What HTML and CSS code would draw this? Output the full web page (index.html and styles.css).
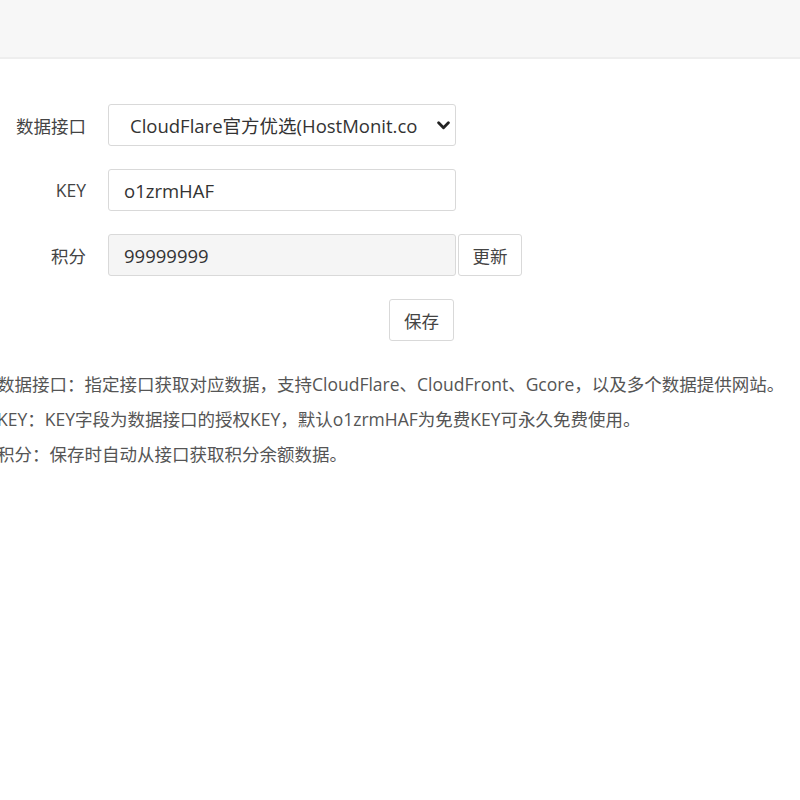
FILE: index.html
```html
<!DOCTYPE html>
<html lang="zh-CN">
<head>
    <meta charset="UTF-8">
    <title>数据接口设置</title>
    <link rel="stylesheet" href="styles.css">
</head>
<body>
    <div class="topbar"></div>

    <div class="panel">
        <form class="form" id="apiForm">
            <div class="row">
                <label class="label" for="apiSource">数据接口</label>
                <div class="select-wrap">
                    <select id="apiSource" class="control select">
                        <option>CloudFlare官方优选(HostMonit.com)</option>
                    </select>
                    <svg class="chevron" viewBox="0 0 12 8" width="12" height="8"><path d="M1.5 1.5 L6 6 L10.5 1.5" fill="none" stroke="#222" stroke-width="2.6" stroke-linecap="round" stroke-linejoin="round"/></svg>
                </div>
            </div>
            <div class="row">
                <label class="label" for="apiKey">KEY</label>
                <input type="text" id="apiKey" class="control" value="o1zrmHAF">
            </div>
            <div class="row">
                <label class="label" for="apiPoints">积分</label>
                <input type="text" id="apiPoints" class="control readonly" value="99999999" readonly>
                <button type="button" class="btn btn-side">更新</button>
            </div>
            <div class="row row-actions">
                <button type="submit" class="btn">保存</button>
            </div>
        </form>

        <div class="help">
            <p>数据接口：指定接口获取对应数据，支持CloudFlare、CloudFront、Gcore，以及多个数据提供网站。</p>
            <p>KEY：KEY字段为数据接口的授权KEY，默认o1zrmHAF为免费KEY可永久免费使用。</p>
            <p>积分：保存时自动从接口获取积分余额数据。</p>
        </div>
    </div>
</body>
</html>
```

FILE: styles.css
```css
body {
    margin: 0;
    font-family: "Open Sans", "Noto Sans CJK SC", sans-serif;
    font-size: 17px;
    color: #444;
    background-color: #fff;
}
.topbar {
    height: 57px;
    background-color: #f7f7f7;
    border-bottom: 2px solid #eeeeee;
}
.panel {
    padding-top: 45px;
}
.form {
    display: flex;
    flex-direction: column;
    gap: 23px;
}
.row {
    display: flex;
    align-items: center;
    height: 42px;
}
.label {
    width: 86px;
    text-align: right;
    margin-right: 22px;
    font-size: 17.5px;
    color: #444;
}
.control {
    width: 348px;
    height: 42px;
    box-sizing: border-box;
    border: 1px solid #d9d9d9;
    border-radius: 3px;
    padding: 0 15px;
    font-family: inherit;
    font-size: 18.5px;
    color: #333;
    background-color: #fff;
    outline: none;
}
.readonly {
    background-color: #f5f5f5;
}
.select-wrap {
    position: relative;
}
.select {
    appearance: none;
    padding-left: 21px;
    padding-right: 37px;
}
.chevron {
    position: absolute;
    right: 6px;
    top: 17px;
    width: 13px;
    height: 9px;
    pointer-events: none;
}
.btn {
    height: 42px;
    padding: 0 14px;
    box-sizing: border-box;
    border: 1px solid #d9d9d9;
    border-radius: 3px;
    background-color: #fff;
    font-family: inherit;
    font-size: 17.5px;
    color: #444;
    white-space: nowrap;
    cursor: pointer;
}
.btn-side {
    width: 64px;
    padding: 0;
    margin-left: 2px;
}
.row-actions {
    padding-left: 389px;
}
.row-actions .btn {
    width: 65px;
    padding: 0;
}
.help {
    margin-top: 26px;
    margin-left: -3px;
    color: #555;
    font-size: 17.5px;
}
.help p {
    margin: 0;
    line-height: 35px;
}
```
